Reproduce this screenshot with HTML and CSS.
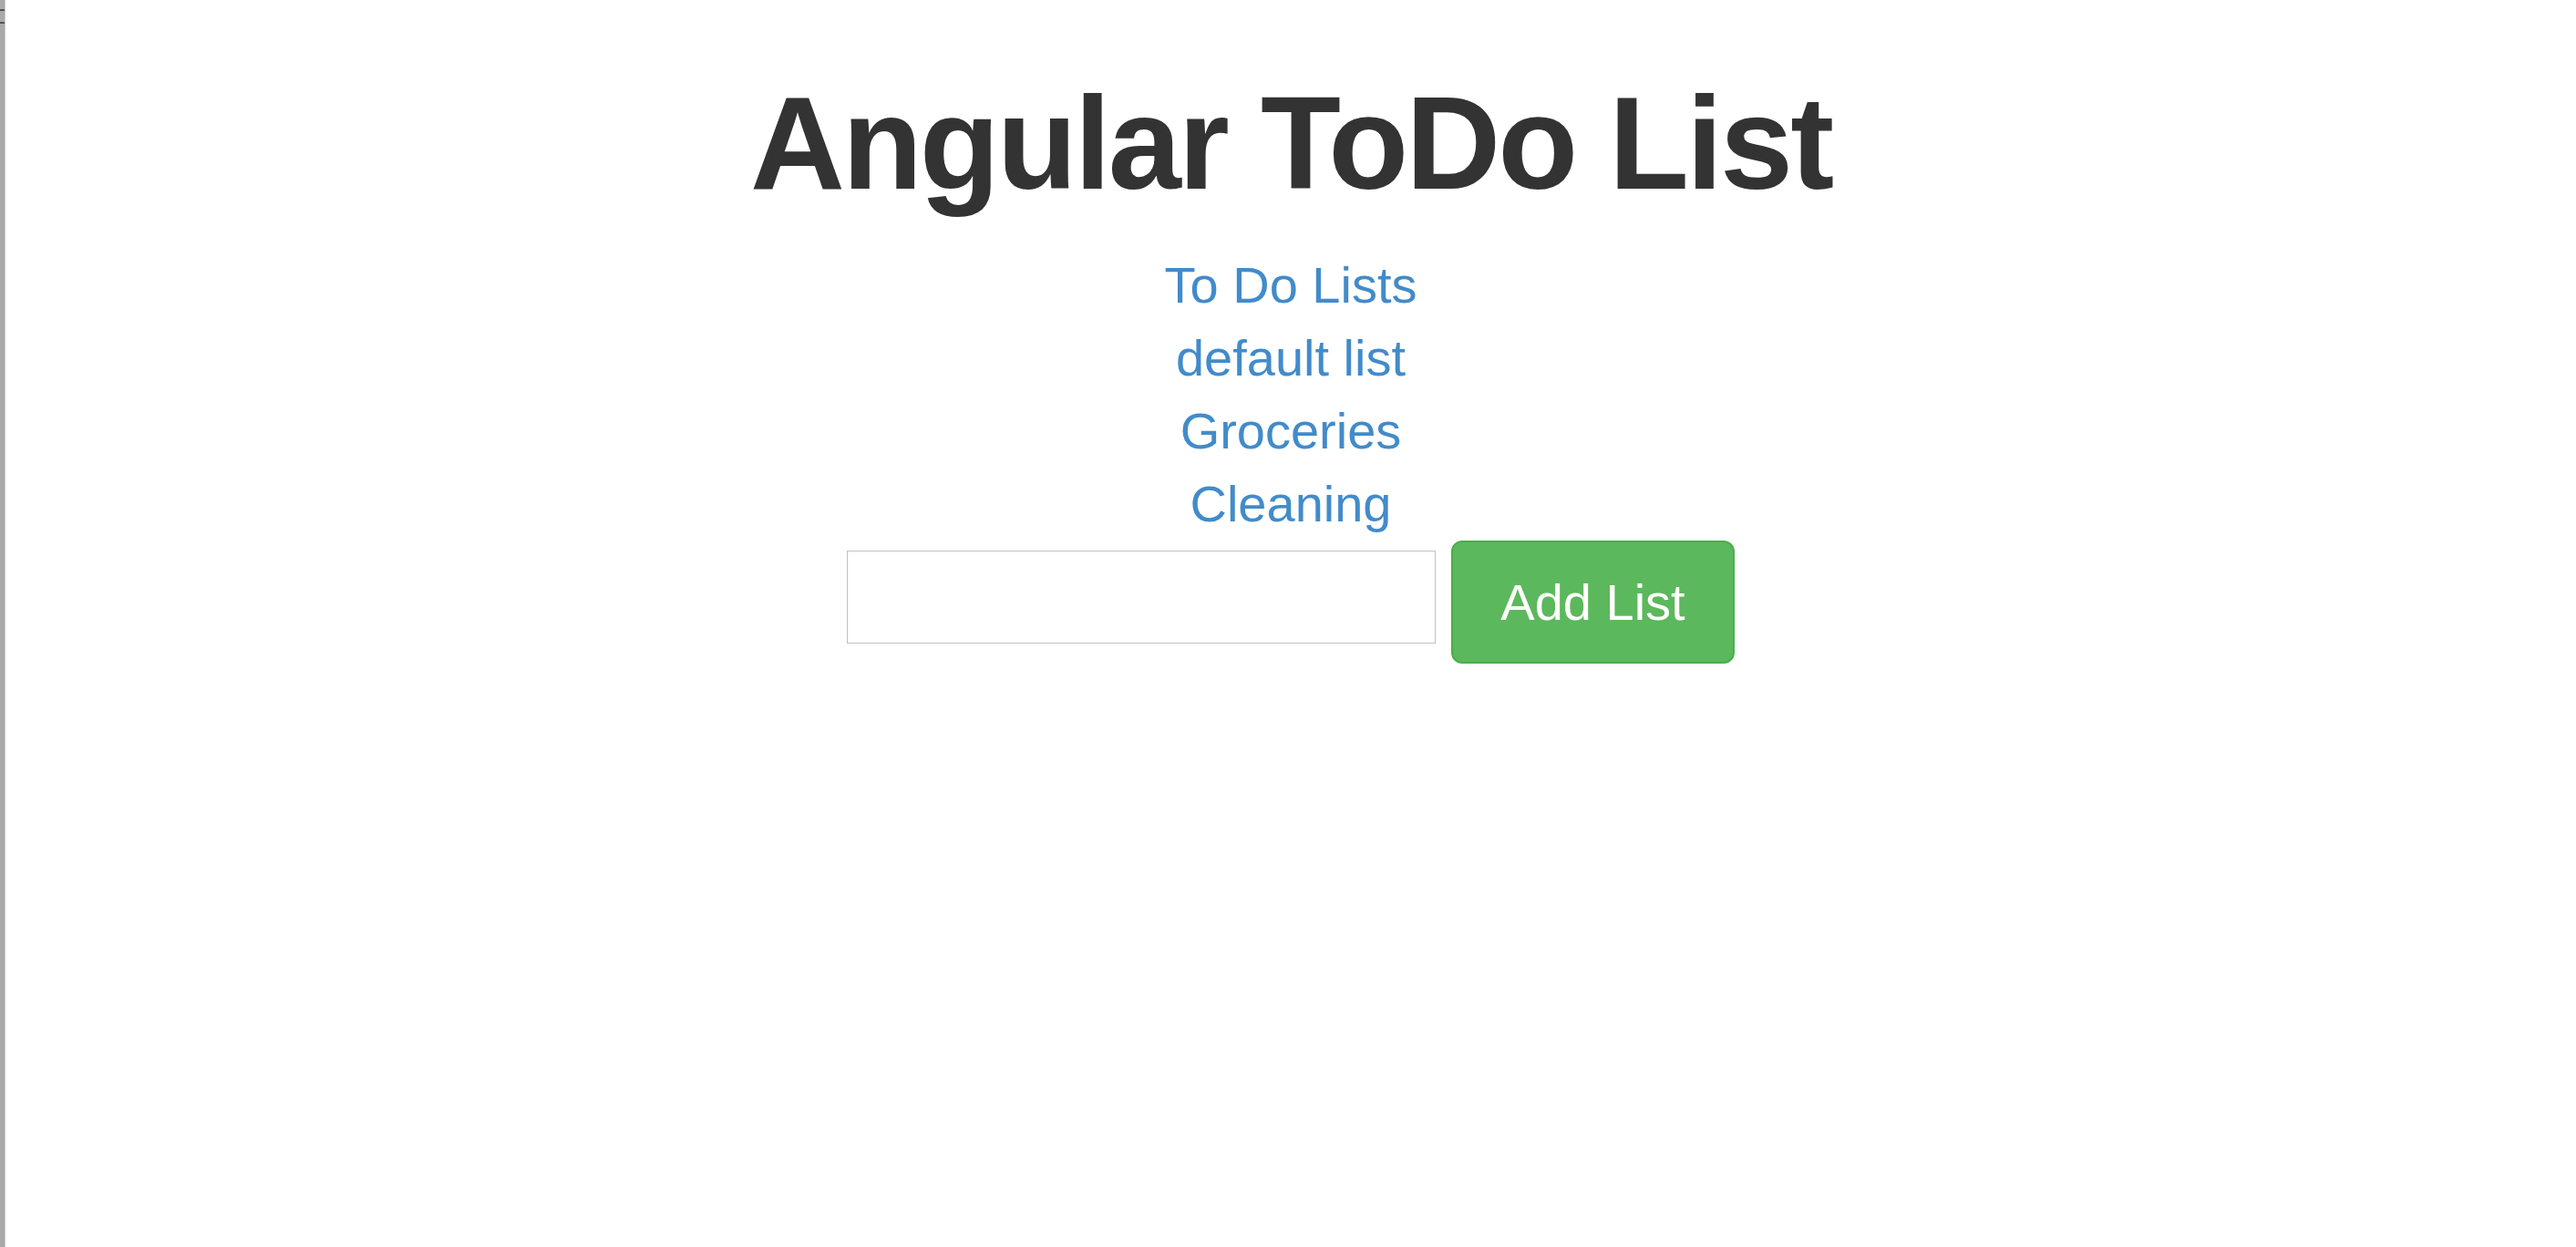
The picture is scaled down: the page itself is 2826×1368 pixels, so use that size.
FILE: index.html
```html
<!DOCTYPE html>
<html>
<head>
<meta charset="utf-8">
<title>Angular ToDo List</title>
<link rel="stylesheet" href="styles.css">
</head>
<body>
<div class="shell">
  <div class="edge">
    <span class="edge-mark edge-mark-1"></span>
    <span class="edge-mark edge-mark-2"></span>
  </div>
  <main class="page">
    <h1 class="title">Angular ToDo List</h1>
    <nav class="lists">
      <a class="list-link" href="#">To Do Lists</a>
      <a class="list-link" href="#">default list</a>
      <a class="list-link" href="#">Groceries</a>
      <a class="list-link" href="#">Cleaning</a>
    </nav>
    <form class="add-form">
      <input class="add-input" type="text">
      <button class="add-btn" type="button">Add List</button>
    </form>
  </main>
</div>
</body>
</html>
```
FILE: styles.css
```css
html, body {
  margin: 0;
  padding: 0;
  background: #fff;
}
body {
  font-family: "Liberation Sans", Arial, Helvetica, sans-serif;
  color: #333;
}
.shell {
  display: flex;
  height: 1368px;
  overflow: hidden;
}
.edge {
  width: 5px;
  flex: 0 0 5px;
  background: #a9a9a9;
  border-right: 1px solid #c8c8c8;
  display: flex;
  flex-direction: column;
}
.edge-mark {
  display: block;
  height: 2px;
  background: #555;
}
.edge-mark-1 { margin-top: 10px; }
.edge-mark-2 { margin-top: 12px; }
.page {
  flex: 1;
  display: flex;
  flex-direction: column;
  align-items: center;
}
.title {
  margin: 79px 0 0;
  font-size: 144px;
  line-height: 1.1;
  font-weight: 700;
  letter-spacing: -3px;
  color: #333;
}
.lists {
  margin-top: 36px;
  display: flex;
  flex-direction: column;
  align-items: center;
}
.list-link {
  font-size: 56px;
  line-height: 80px;
  color: #428bca;
  text-decoration: none;
}
.add-form {
  display: flex;
  align-items: flex-start;
  gap: 17px;
}
.add-input {
  margin-top: 11px;
  width: 646px;
  height: 102px;
  box-sizing: border-box;
  border: 1px solid #c0c0c0;
  padding: 0 12px;
  font-size: 40px;
  font-family: "Liberation Sans", Arial, sans-serif;
  outline: none;
}
.add-btn {
  width: 311px;
  height: 135px;
  box-sizing: border-box;
  border: 2px solid #4cae4c;
  border-radius: 12px;
  background: #5cb85c;
  color: #fff;
  font-family: "Liberation Sans", Arial, sans-serif;
  font-size: 56px;
  line-height: 80px;
  padding: 0;
}
```
